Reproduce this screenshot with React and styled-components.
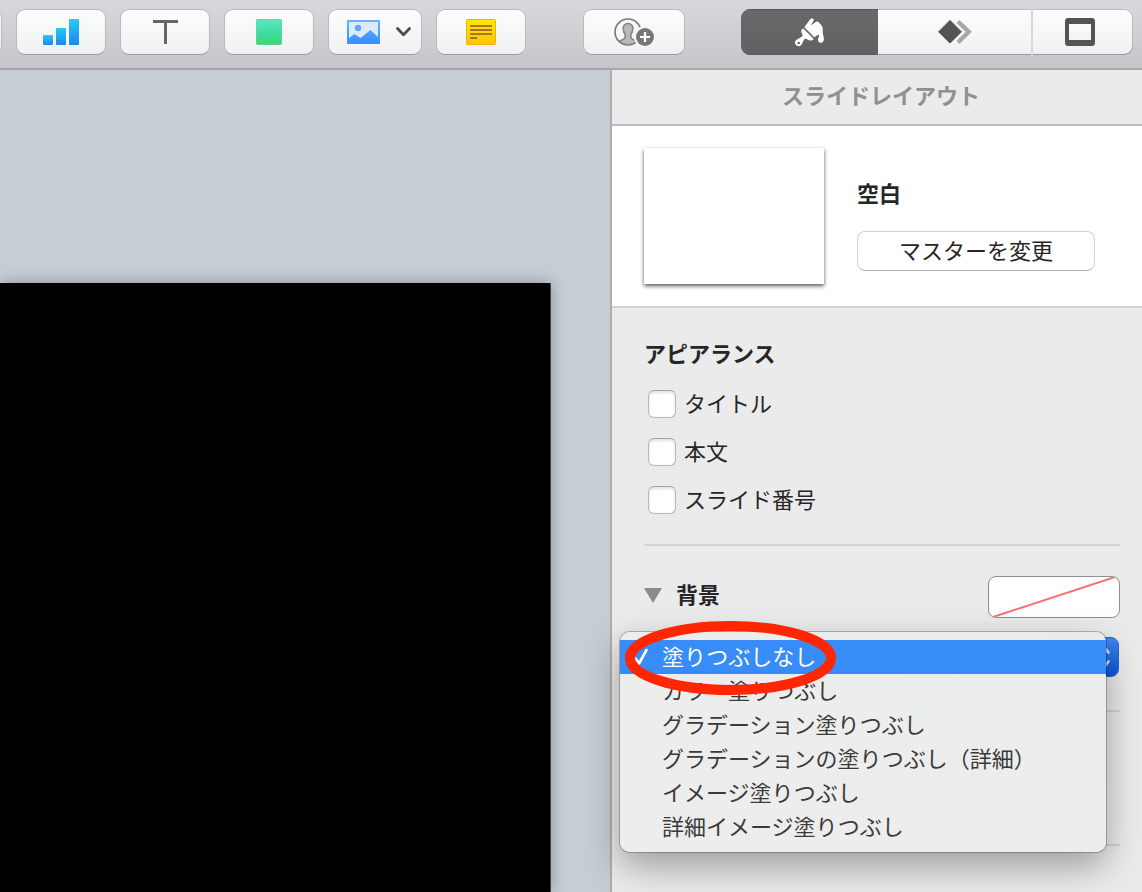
import React, { useState } from "react";
import styled, { createGlobalStyle, css } from "styled-components";

const GlobalStyle = createGlobalStyle`
  * {
    box-sizing: border-box;
  }
  body {
    margin: 0;
    background: #c6cdd5;
    color: #262626;
    font-family: "Noto Sans CJK JP", "Noto Sans", sans-serif;
    font-size: 22px;
    line-height: 32px;
    overflow: hidden;
  }
  button,
  select {
    margin: 0;
    padding: 0;
    color: inherit;
    font: inherit;
  }
`;

const Page = styled.div`
  display: flex;
  flex-direction: column;
  min-height: 100vh;
`;

const Toolbar = styled.header`
  display: flex;
  justify-content: space-between;
  align-items: flex-start;
  height: 70px;
  padding: 9px 9px 0 0;
  background: linear-gradient(#d8d9dc, #c5c6ca);
  border-bottom: 2px solid #a5a7ab;
`;

const ToolGroup = styled.div`
  display: flex;
  gap: 14px;
  margin-left: -88px;
`;

const ToolButton = styled.button`
  display: flex;
  align-items: center;
  justify-content: center;
  gap: 16px;
  width: ${(props) => props.$width || 90}px;
  height: 46px;
  padding-left: ${(props) => (props.$menu ? 8 : 0)}px;
  background: linear-gradient(#fcfdfd, #f0f0f0);
  border: 1px solid #b9babd;
  border-bottom-color: #98999c;
  border-radius: 9px;
`;

const Segments = styled.div`
  display: grid;
  grid-template-columns: 137fr 153fr 102fr;
  width: 392px;
  height: 46px;
  background: linear-gradient(#fcfdfd, #f0f0f0);
  border-radius: 9px;
  box-shadow: inset 0 -1px #98999c, inset 0 0 0 1px #b9babd;
  overflow: hidden;
`;

const Segment = styled.button`
  display: flex;
  align-items: center;
  justify-content: center;
  border: 0;
  background: none;
  & + & + & {
    padding-right: 6px;
    border-left: 2px solid #d7d8d9;
  }
  ${(props) =>
    props.$active &&
    css`
      background: linear-gradient(#68696b, #606163);
      box-shadow: inset 0 1px #58595b, inset 0 -1px #58595b;
    `}
`;

const Main = styled.main`
  display: flex;
  flex: 1;
`;

const Canvas = styled.div`
  display: flex;
  flex: 1;
  padding: 213px 59px 0 0;
`;

const Slide = styled.div`
  flex: 1;
  background: #000;
  border-right: 1px solid #444;
  box-shadow: 0 0 14px rgba(0, 0, 0, 0.3);
`;

const Panel = styled.aside`
  flex: 0 0 532px;
  background: #ebebeb;
  border-left: 2px solid #aeaeae;
`;

const PanelTitle = styled.h1`
  margin: 0;
  padding: 8px 0 14px 8px;
  border-bottom: 2px solid #b9bdc1;
  color: #8e9092;
  font-size: 22px;
  font-weight: 700;
  text-align: center;
`;

const Master = styled.section`
  display: flex;
  gap: 33px;
  padding: 22px 32px;
  background: #fff;
  border-bottom: 2px solid #d4d4d4;
`;

const Thumbnail = styled.div`
  width: 180px;
  height: 136px;
  background: #fff;
  box-shadow: 0 2px 4px rgba(0, 0, 0, 0.65);
`;

const MasterInfo = styled.div`
  display: flex;
  flex-direction: column;
  gap: 23px;
  padding-top: 28px;
`;

const Heading = styled.h2`
  margin: 0;
  font-size: 22px;
  font-weight: 700;
`;

const ChangeButton = styled.button`
  width: 238px;
  height: 40px;
  padding-bottom: 4px;
  background: #fff;
  border: 1px solid #d2d2d2;
  border-bottom-color: #b4b4b4;
  border-radius: 8px;
`;

const Section = styled.section`
  margin: 0 22px 0 32px;
  padding: ${(props) => props.$padding};
  border-bottom: 2px solid #d3d3d3;
`;

const Checks = styled.div`
  display: grid;
  gap: 20px;
  margin: 22px 0 0 4px;
`;

const CheckLabel = styled.label`
  display: flex;
  align-items: center;
  gap: 8px;
  height: 28px;
`;

// lifts the glyphs to the optical centre of a row
const Caption = styled.span`
  padding-bottom: 4px;
`;

const Checkbox = styled.input`
  appearance: none;
  width: 28px;
  height: 28px;
  margin: 0;
  background: #fff;
  border: 1px solid #b8b8b8;
  border-top-color: #a2a2a2;
  border-radius: 6px;
  box-shadow: inset 0 2px 3px rgba(0, 0, 0, 0.12);
  &:checked {
    background: #378cf7;
  }
`;

const FillRow = styled.div`
  display: flex;
  align-items: center;
  justify-content: space-between;
  height: 42px;
`;

const Disclosure = styled.button`
  display: flex;
  align-items: center;
  gap: 14px;
  padding-bottom: 4px;
  border: 0;
  background: none;
  font-weight: 700;
`;

const Swatch = styled.button`
  width: 132px;
  height: 42px;
  background: #fff;
  border: 1px solid #8f8f8f;
  border-radius: 8px;
  overflow: hidden;
  svg {
    display: block;
    width: 100%;
    height: 100%;
  }
`;

const Picker = styled.div`
  position: relative;
  margin-top: 19px;
  padding-right: 1px;
`;

const FillSelect = styled.select`
  appearance: none;
  display: block;
  width: 100%;
  height: 40px;
  padding-left: 16px;
  background: linear-gradient(#4187f4, #0a57dc) right / 32px 100% no-repeat #fff;
  border: 1px solid #2465d6;
  border-radius: 8px;
`;

const SelectArrows = styled.svg`
  position: absolute;
  top: 7px;
  right: 10px;
  pointer-events: none;
`;

const Menu = styled.div`
  position: absolute;
  top: -5px;
  right: 14px;
  left: -24px;
  padding: 8px 0;
  background: linear-gradient(200deg, #e9ecef, #ededed 45%);
  border-radius: 10px;
  box-shadow: 0 0 0 1px rgba(0, 0, 0, 0.24), 0 14px 36px rgba(0, 0, 0, 0.34);
`;

const MenuItem = styled.button`
  display: flex;
  align-items: center;
  width: 100%;
  height: 34px;
  border: 0;
  background: ${(props) => (props.$active ? "#378cf7" : "transparent")};
  color: ${(props) => (props.$active ? "#fff" : "#3a3a3a")};
  text-align: left;
`;

const CheckColumn = styled.span`
  display: flex;
  justify-content: center;
  width: 42px;
`;

const Marker = styled.svg`
  position: absolute;
  top: -11px;
  left: 5px;
  pointer-events: none;
`;

const fills = [
  "塗りつぶしなし",
  "カラー塗りつぶし",
  "グラデーション塗りつぶし",
  "グラデーションの塗りつぶし（詳細）",
  "イメージ塗りつぶし",
  "詳細イメージ塗りつぶし",
];

const appearance = ["タイトル", "本文", "スライド番号"];

function ChartIcon() {
  return (
    <svg width="36" height="26" viewBox="0 0 36 26">
      <defs>
        <linearGradient id="bar" x1="0" y1="0" x2="0" y2="1">
          <stop offset="0" stopColor="#25cbfb" />
          <stop offset="1" stopColor="#1f84ef" />
        </linearGradient>
      </defs>
      <rect x="0" y="16" width="10" height="10" rx="1" fill="url(#bar)" />
      <rect x="13" y="9" width="10" height="17" rx="1" fill="url(#bar)" />
      <rect x="26" y="0" width="10" height="26" rx="1" fill="url(#bar)" />
    </svg>
  );
}

function TextIcon() {
  return (
    <svg width="25" height="24" viewBox="0 0 25 24" fill="none" stroke="#666" strokeWidth="3">
      <path d="M0 1.5H25M12.5 1.5V24" />
    </svg>
  );
}

function ShapeIcon() {
  return (
    <svg width="26" height="26" viewBox="0 0 26 26">
      <defs>
        <linearGradient id="shape" x1="0" y1="0" x2="0" y2="1">
          <stop offset="0" stopColor="#5fe6c4" />
          <stop offset="0.6" stopColor="#3ddc9c" />
          <stop offset="1" stopColor="#42d66c" />
        </linearGradient>
      </defs>
      <rect x="0.5" y="0.5" width="25" height="25" rx="1" fill="url(#shape)" stroke="#35c787" strokeOpacity="0.6" />
    </svg>
  );
}

function MediaIcon() {
  return (
    <svg width="33" height="24" viewBox="0 0 33 24">
      <defs>
        <linearGradient id="media" x1="0" y1="0" x2="0" y2="1">
          <stop offset="0" stopColor="#6eb2fd" />
          <stop offset="1" stopColor="#338ffc" />
        </linearGradient>
      </defs>
      <rect width="33" height="24" rx="1" fill="url(#media)" />
      <path d="M2 2H31V17L23.5 10L13.5 18L7.5 14L2 18Z" fill="#dcecfe" />
      <circle cx="11" cy="8" r="3.2" fill="#5ea8fc" />
    </svg>
  );
}

function ChevronIcon() {
  return (
    <svg width="15" height="10" viewBox="0 0 15 10" fill="none" stroke="#4d4d4d" strokeWidth="2.8" strokeLinecap="round" strokeLinejoin="round">
      <path d="M1.5 1.5L7.5 7.8L13.5 1.5" />
    </svg>
  );
}

function CommentIcon() {
  return (
    <svg width="30" height="26" viewBox="0 0 30 26">
      <defs>
        <linearGradient id="note" x1="0" y1="0" x2="0" y2="1">
          <stop offset="0" stopColor="#ffe800" />
          <stop offset="1" stopColor="#ffc400" />
        </linearGradient>
      </defs>
      <rect x="0.5" y="0.5" width="29" height="25" rx="1" fill="url(#note)" stroke="#f0b400" />
      <path d="M4 7H26M4 11H26M4 15H26M4 19H11" stroke="#a3742a" strokeWidth="2" />
    </svg>
  );
}

function ShareIcon() {
  return (
    <svg width="40" height="28" viewBox="0 0 40 28">
      <defs>
        <clipPath id="portrait">
          <circle cx="14" cy="14" r="12.5" />
        </clipPath>
      </defs>
      <path
        clipPath="url(#portrait)"
        d="M14 5.5C10.8 5.5 9 7.6 9.2 10.6C9.3 13.6 10.2 14.8 11.2 16.6C11.4 18.6 11.2 20.2 10 21L3 24.5V28H25V24.5L18 21C16.8 20.2 16.6 18.6 16.8 16.6C17.8 14.8 18.7 13.6 18.8 10.6C19 7.6 17.2 5.5 14 5.5Z"
        fill="#b9b9b9"
        stroke="#858585"
        strokeWidth="1.6"
      />
      <circle cx="14" cy="14" r="13" fill="none" stroke="#7a7a7a" strokeWidth="1.7" />
      <circle cx="31" cy="19" r="11" fill="#f6f6f6" />
      <circle cx="31" cy="19" r="9" fill="#777" />
      <path d="M31 14V24M26 19H36" stroke="#fff" strokeWidth="2.2" />
    </svg>
  );
}

function BrushIcon() {
  return (
    <svg width="32" height="30" viewBox="0 0 32 30" fill="#fff">
      <path
        fillRule="evenodd"
        d="M8 12.2C8.6 11.4 9.2 11.5 9.8 12L19 21.2C19.6 21.9 19.5 22.5 18.8 23C16.8 24 14.8 23.4 13 22.2C11.6 21.4 10.8 22 9.8 23.1L7.8 27.2C6.6 29.4 3.8 29.8 2 28C0.3 26.2 0.8 23.6 2.9 22.4L7 20.3C8.6 19.2 9 18.4 8.2 16.9C7.2 15 6.8 13.6 8 12.2ZM4.7 24.7A1.3 1.3 0 1 0 4.7 27.3A1.3 1.3 0 1 0 4.7 24.7Z"
      />
      <path d="M10.4 10.3L15.8 2.8C16.5 1.6 18.4 1 19.3 1.8C20.1 2.6 19.6 3.8 18.8 5L16.7 8.4L21.4 5.2C22.8 4.2 24 4.5 25 5.5L28 9C29 10.4 28.8 12.5 28.7 15C28.8 18 29.9 19.5 29.9 22.2C29.9 24.4 28.6 25.7 26.9 25.7C25 25.7 23.8 24.3 23.9 22.5C24 20.6 25.5 19.6 25 18.2C24.6 17.6 23.8 17.8 23 18.4L20.3 20.3Z" />
    </svg>
  );
}

function AnimateIcon() {
  return (
    <svg width="36" height="26" viewBox="0 0 36 26">
      <path d="M21 2.5L31.8 12.8L21 23.5" fill="none" stroke="#a9a9a9" strokeWidth="4.4" />
      <path d="M13 0.5L25.3 12.8L13 25.1L0.7 12.8Z" fill="#545454" stroke="#f7f7f7" strokeWidth="0.8" strokeLinejoin="round" />
    </svg>
  );
}

function DocumentIcon() {
  return (
    <svg width="30" height="28" viewBox="0 0 30 28">
      <path
        fillRule="evenodd"
        d="M3 0H27A3 3 0 0 1 30 3V25A3 3 0 0 1 27 28H3A3 3 0 0 1 0 25V3A3 3 0 0 1 3 0ZM4 6V22H26V6Z"
        fill="#545454"
      />
    </svg>
  );
}

export default function App() {
  const [fill, setFill] = useState(fills[0]);
  const [tab, setTab] = useState("format");

  return (
    <>
      <GlobalStyle />
      <Page>
        <Toolbar>
          <ToolGroup>
            <ToolButton aria-label="表" />
            <ToolButton aria-label="グラフ">
              <ChartIcon />
            </ToolButton>
            <ToolButton aria-label="テキスト">
              <TextIcon />
            </ToolButton>
            <ToolButton aria-label="図形">
              <ShapeIcon />
            </ToolButton>
            <ToolButton aria-label="メディア" $width={94} $menu>
              <MediaIcon />
              <ChevronIcon />
            </ToolButton>
            <ToolButton aria-label="コメント">
              <CommentIcon />
            </ToolButton>
          </ToolGroup>
          <ToolButton aria-label="共同制作" $width={102}>
            <ShareIcon />
          </ToolButton>
          <Segments>
            <Segment aria-label="フォーマット" $active={tab === "format"} onClick={() => setTab("format")}>
              <BrushIcon />
            </Segment>
            <Segment aria-label="アニメーション" $active={tab === "animate"} onClick={() => setTab("animate")}>
              <AnimateIcon />
            </Segment>
            <Segment aria-label="書類" $active={tab === "document"} onClick={() => setTab("document")}>
              <DocumentIcon />
            </Segment>
          </Segments>
        </Toolbar>
        <Main>
          <Canvas>
            <Slide />
          </Canvas>
          <Panel>
            <PanelTitle>スライドレイアウト</PanelTitle>
            <Master>
              <Thumbnail />
              <MasterInfo>
                <Heading>空白</Heading>
                <ChangeButton>マスターを変更</ChangeButton>
              </MasterInfo>
            </Master>
            <Section $padding="28px 0 30px">
              <Heading>アピアランス</Heading>
              <Checks>
                {appearance.map((name, i) => (
                  <CheckLabel key={name} htmlFor={`show-${i}`}>
                    <Checkbox type="checkbox" id={`show-${i}`} />
                    <Caption>{name}</Caption>
                  </CheckLabel>
                ))}
              </Checks>
            </Section>
            <Section $padding="30px 0 33px">
              <FillRow>
                <Disclosure aria-expanded="true">
                  <svg width="18" height="15" viewBox="0 0 18 15">
                    <path d="M0 0H18L9 15Z" fill="#8a8a8a" />
                  </svg>
                  <Caption>背景</Caption>
                </Disclosure>
                <Swatch aria-label="塗りつぶしのカラー">
                  <svg viewBox="0 0 130 40" preserveAspectRatio="none">
                    <path d="M4 40L126 0" stroke="#fb6f6f" strokeWidth="2" />
                  </svg>
                </Swatch>
              </FillRow>
              <Picker>
                <FillSelect aria-label="背景" value={fill} onChange={(e) => setFill(e.target.value)}>
                  {fills.map((name) => (
                    <option key={name}>{name}</option>
                  ))}
                </FillSelect>
                <SelectArrows width="14" height="26" viewBox="0 0 14 26" fill="none" stroke="#dfe6f3" strokeWidth="2.6" strokeLinecap="round" strokeLinejoin="round">
                  <path d="M1.5 8.5L7 1.5L12.5 8.5M1.5 17.5L7 24.5L12.5 17.5" />
                </SelectArrows>
                <Menu>
                  {fills.map((name) => (
                    <MenuItem key={name} $active={name === fill} onClick={() => setFill(name)}>
                      <CheckColumn>
                        {name === fill && (
                          <svg width="14" height="18" viewBox="0 0 14 18" fill="none" stroke="#fff" strokeWidth="2.6" strokeLinecap="round" strokeLinejoin="round">
                            <path d="M1.5 10.5L5 15.5L12.5 2" />
                          </svg>
                        )}
                      </CheckColumn>
                      <Caption>{name}</Caption>
                    </MenuItem>
                  ))}
                  <Marker width="211" height="74" viewBox="0 0 211 74">
                    <ellipse cx="105.5" cy="37" rx="100.5" ry="32" fill="none" stroke="#ff2600" strokeWidth="10" />
                  </Marker>
                </Menu>
              </Picker>
            </Section>
            <Section $padding="132px 0 0" />
          </Panel>
        </Main>
      </Page>
    </>
  );
}
